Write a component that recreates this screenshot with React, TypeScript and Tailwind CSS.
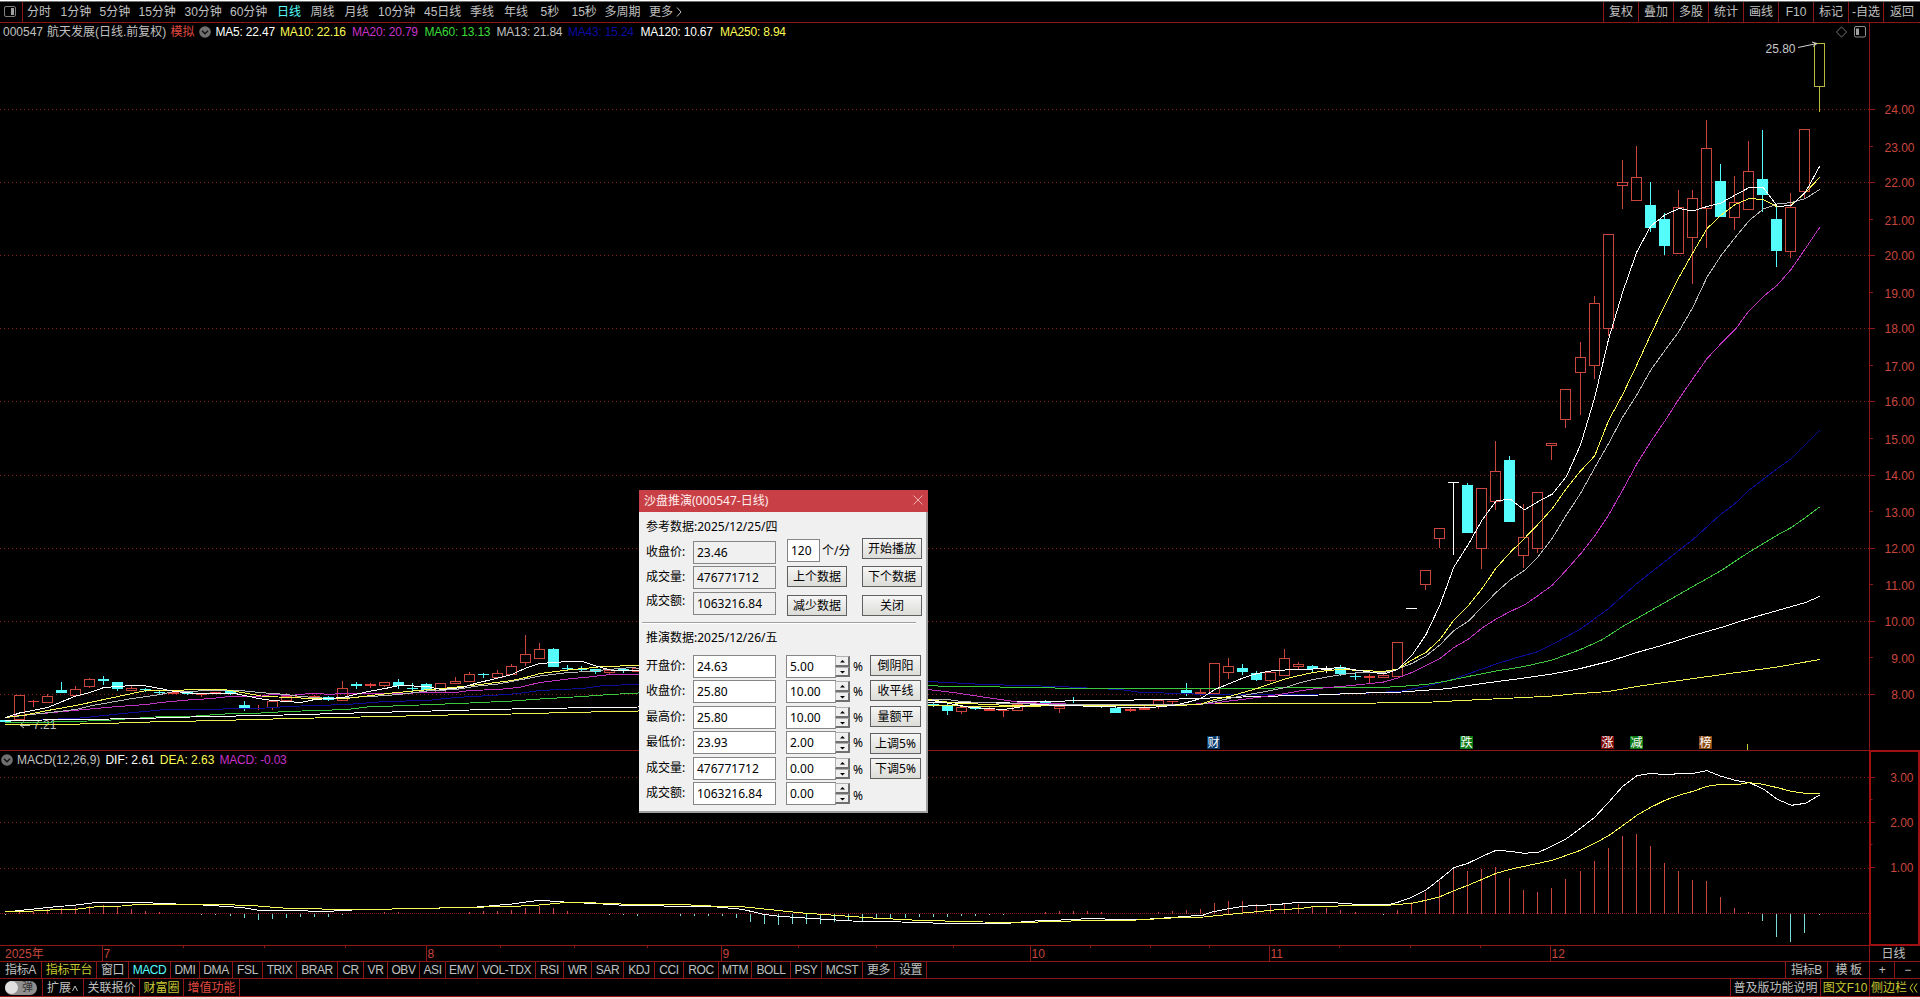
import clsx from "clsx";

const FONT = "font-['Liberation_Sans','Noto_Sans_CJK_SC',sans-serif]";
const DIALOG_FONT = "font-['Noto_Sans','Noto_Sans_CJK_SC',sans-serif]";

const RED = "#c8463e";
const LINE = "#8e1616";
const CYAN = "#54fcfc";

const periods = [
  { label: "分时", w: "w-[33.5px]" },
  { label: "1分钟", w: "w-[39px]" },
  { label: "5分钟", w: "w-[39px]" },
  { label: "15分钟", w: "w-[46px]" },
  { label: "30分钟", w: "w-[45.5px]" },
  { label: "60分钟", w: "w-[47px]" },
  { label: "日线", w: "w-[33.5px]", active: true },
  { label: "周线", w: "w-[34px]" },
  { label: "月线", w: "w-[33.5px]" },
  { label: "10分钟", w: "w-[46px]" },
  { label: "45日线", w: "w-[46px]" },
  { label: "季线", w: "w-[34px]" },
  { label: "年线", w: "w-[36.5px]" },
  { label: "5秒", w: "w-[31px]" },
  { label: "15秒", w: "w-[33px]" },
  { label: "多周期", w: "w-[44.5px]" },
  { label: "更多", w: "w-[26px]" },
];

const tools = ["复权", "叠加", "多股", "统计", "画线", "F10", "标记", "-自选", "返回"];

const averages = [
  { text: "MA5: 22.47", cls: "w-[64.5px] text-white" },
  { text: "MA10: 22.16", cls: "w-[72px] text-[#fcfc54]" },
  { text: "MA20: 20.79", cls: "w-[72.5px] text-[#c832c8]" },
  { text: "MA60: 13.13", cls: "w-[72px] text-[#3cdc3c]" },
  { text: "MA13: 21.84", cls: "w-[71.5px] text-[#c0c0c0]" },
  { text: "MA43: 15.24", cls: "w-[72.5px] text-[#0c0ca0]" },
  { text: "MA120: 10.67", cls: "w-[79.5px] text-white" },
  { text: "MA250: 8.94", cls: "w-[80px] text-[#fcfc54]" },
];

const indicators = [
  { label: "指标A", cls: "w-[42px]" },
  { label: "指标平台", cls: "w-[55px] text-[#c8c832]" },
  { label: "窗口", cls: "w-[32px]" },
  { label: "MACD", cls: "w-[42px] text-[#54fcfc]" },
  { label: "DMI", cls: "w-[29px]" },
  { label: "DMA", cls: "w-[33px]" },
  { label: "FSL", cls: "w-[30px]" },
  { label: "TRIX", cls: "w-[34px]" },
  { label: "BRAR", cls: "w-[41px]" },
  { label: "CR", cls: "w-[26px]" },
  { label: "VR", cls: "w-[24px]" },
  { label: "OBV", cls: "w-[32px]" },
  { label: "ASI", cls: "w-[26px]" },
  { label: "EMV", cls: "w-[32px]" },
  { label: "VOL-TDX", cls: "w-[58px]" },
  { label: "RSI", cls: "w-[28px]" },
  { label: "WR", cls: "w-[28px]" },
  { label: "SAR", cls: "w-[32px]" },
  { label: "KDJ", cls: "w-[31px]" },
  { label: "CCI", cls: "w-[29px]" },
  { label: "ROC", cls: "w-[35px]" },
  { label: "MTM", cls: "w-[33px]" },
  { label: "BOLL", cls: "w-[39px]" },
  { label: "PSY", cls: "w-[31px]" },
  { label: "MCST", cls: "w-[41px]" },
  { label: "更多", cls: "w-[32px]" },
  { label: "设置", cls: "w-[32px]" },
];

// r hollow up, f flat up, c down, w unchanged, y simulated
type Kind = "r" | "f" | "c" | "w" | "y";
// [index, high, body top, body bottom, low, kind]
type Candle = [number, number, number, number, number, Kind];

const candles: Candle[] = [
  [0, 720, 720, 722, 722, "c"],
  [1, 695, 695, 720, 720, "r"],
  [2, 700, 701, 702, 707, "f"],
  [3, 694, 696, 703, 703, "r"],
  [4, 682, 690, 693, 693, "c"],
  [5, 686, 689, 696, 696, "r"],
  [6, 678, 679, 687, 688, "r"],
  [7, 676, 679, 681, 685, "c"],
  [8, 682, 682, 689, 691, "c"],
  [9, 686, 688, 691, 691, "r"],
  [10, 688, 689, 690, 692, "c"],
  [11, 690, 692, 693, 695, "c"],
  [12, 692, 692, 694, 694, "f"],
  [13, 691, 691, 694, 695, "c"],
  [14, 693, 694, 695, 697, "f"],
  [15, 692, 692, 693, 693, "f"],
  [16, 691, 691, 694, 695, "c"],
  [17, 701, 705, 708, 711, "c"],
  [18, 705, 708, 709, 710, "f"],
  [19, 701, 701, 708, 710, "r"],
  [20, 693, 696, 701, 701, "r"],
  [21, 696, 696, 697, 697, "f"],
  [22, 695, 696, 698, 698, "f"],
  [23, 696, 697, 700, 701, "c"],
  [24, 681, 688, 701, 701, "r"],
  [25, 682, 684, 686, 689, "c"],
  [26, 683, 684, 686, 688, "f"],
  [27, 682, 682, 686, 687, "r"],
  [28, 679, 682, 686, 689, "c"],
  [29, 683, 688, 689, 691, "c"],
  [30, 683, 684, 690, 692, "c"],
  [31, 683, 683, 693, 693, "r"],
  [32, 677, 681, 684, 684, "r"],
  [33, 672, 674, 682, 682, "r"],
  [34, 673, 674, 675, 678, "c"],
  [35, 670, 673, 678, 678, "r"],
  [36, 664, 666, 675, 675, "r"],
  [37, 635, 654, 663, 666, "r"],
  [38, 643, 649, 659, 659, "r"],
  [39, 648, 649, 667, 667, "c"],
  [40, 665, 668, 669, 671, "c"],
  [41, 666, 669, 670, 672, "c"],
  [42, 669, 669, 672, 674, "c"],
  [43, 670, 670, 673, 675, "r"],
  [44, 668, 669, 670, 673, "c"],
  [45, 668, 668, 672, 672, "r"],
  [66, 702, 704, 705, 707, "c"],
  [67, 704, 705, 711, 715, "c"],
  [68, 707, 707, 712, 714, "r"],
  [69, 707, 707, 709, 710, "c"],
  [70, 706, 709, 711, 711, "f"],
  [71, 709, 710, 711, 717, "f"],
  [72, 704, 704, 711, 711, "r"],
  [73, 702, 702, 704, 704, "f"],
  [74, 700, 702, 703, 705, "c"],
  [75, 706, 706, 709, 713, "r"],
  [76, 697, 700, 701, 703, "c"],
  [78, 704, 705, 707, 708, "c"],
  [79, 706, 708, 713, 713, "c"],
  [80, 708, 709, 711, 712, "f"],
  [81, 706, 708, 710, 710, "f"],
  [82, 700, 700, 706, 709, "r"],
  [83, 701, 701, 702, 704, "f"],
  [84, 683, 690, 694, 696, "c"],
  [85, 689, 692, 694, 696, "r"],
  [86, 663, 663, 694, 694, "r"],
  [87, 658, 666, 673, 679, "r"],
  [88, 664, 668, 672, 675, "c"],
  [89, 671, 673, 680, 681, "c"],
  [90, 672, 672, 681, 682, "r"],
  [91, 649, 658, 676, 676, "r"],
  [92, 662, 664, 667, 669, "r"],
  [93, 665, 666, 669, 672, "c"],
  [94, 666, 669, 670, 673, "w"],
  [95, 665, 667, 674, 676, "c"],
  [96, 673, 676, 677, 680, "c"],
  [97, 674, 676, 678, 683, "f"],
  [98, 671, 675, 678, 678, "r"],
  [99, 642, 642, 677, 677, "r"],
  [100, 608, 608, 609, 609, "w"],
  [101, 570, 570, 585, 590, "r"],
  [102, 528, 528, 539, 548, "r"],
  [103, 482, 482, 483, 555, "w"],
  [104, 483, 485, 533, 533, "c"],
  [105, 488, 488, 549, 569, "r"],
  [106, 441, 471, 502, 510, "r"],
  [107, 456, 460, 522, 522, "c"],
  [108, 504, 537, 556, 568, "r"],
  [109, 492, 492, 549, 553, "r"],
  [110, 443, 443, 446, 460, "r"],
  [111, 389, 389, 420, 428, "r"],
  [112, 342, 357, 373, 415, "r"],
  [113, 296, 303, 366, 379, "r"],
  [114, 234, 234, 329, 336, "r"],
  [115, 160, 182, 186, 209, "r"],
  [116, 146, 177, 201, 201, "r"],
  [117, 182, 205, 228, 232, "c"],
  [118, 213, 219, 246, 255, "c"],
  [119, 190, 207, 254, 254, "r"],
  [120, 190, 198, 238, 284, "r"],
  [121, 120, 148, 209, 248, "r"],
  [122, 164, 181, 217, 217, "c"],
  [123, 176, 202, 218, 230, "r"],
  [124, 141, 171, 210, 210, "r"],
  [125, 130, 179, 195, 212, "c"],
  [126, 204, 219, 251, 267, "c"],
  [127, 193, 207, 252, 258, "r"],
  [128, 129, 129, 192, 199, "r"],
  [129, 43, 43, 87, 112, "y"],
];

// flat lists of index, y
const MA5 = [
  0, 717.5, 1, 713, 3, 707.5, 5, 696, 6, 692.5, 7, 687.5, 9, 685.5, 10, 686, 11, 688.5, 12, 691.5, 13.5, 693.5,
  16.5, 694, 18, 698.5, 19, 700.5, 21, 702.5, 22, 699.5, 24, 697.5, 25, 694, 26, 691, 27, 688.5, 28, 685.5,
  30, 686.5, 31, 689.5, 32.5, 687.5, 33.5, 683, 34, 681.5, 36, 674.5, 37, 668, 38, 663.5, 39, 662.5, 40, 661.5,
  41, 661.5, 42, 666, 43, 670, 45, 670.5, 65.6, 700, 66.6, 702, 68.6, 707.5, 71, 709.5, 72, 707.5, 73, 704.5,
  79, 707, 81, 708, 83, 705.5, 84, 702.5, 85, 698.5, 86, 689.5, 88, 678, 89, 673.5, 90, 671, 91, 670, 94, 668.5,
  95, 667.5, 96, 670, 97, 672, 98, 674, 99, 669.5, 100, 655.5, 101, 635, 102, 605, 103, 567, 104, 545, 105, 520,
  106, 501, 107, 499, 108, 510, 109, 501.5, 110, 494, 111, 476.5, 112, 445, 113, 398, 114, 339, 115, 292,
  116, 252, 117, 226, 118, 215, 119, 208.5, 120, 211, 121, 206.5, 122, 203, 123, 195, 124, 187.5, 125, 187.5,
  126, 206.5, 127, 205.5, 128, 192, 129, 166.5,
];
const MA10 = [
  0, 717.5, 1.4, 715, 3.2, 710, 5, 705.5, 6, 702.5, 8, 696.5, 10, 690.5, 15.5, 689.5, 17, 693, 18.2, 696,
  20, 697.5, 22, 698.5, 24.6, 698, 26, 695.5, 27.5, 693, 29, 691, 31, 688.5, 32.5, 686.5, 34, 684, 36, 680.5,
  37, 677.5, 38, 673.5, 40, 670, 41.5, 668, 42.5, 666.5, 45, 665.5, 65.6, 699.5, 67.5, 703, 70, 704.5, 72, 706,
  75.5, 705.5, 80, 705.5, 83, 706, 85, 704, 86, 699.5, 87, 696.5, 88, 692.5, 89, 688.5, 90, 683.5, 91, 679,
  92, 675.5, 93, 672.5, 94, 670.5, 95, 669.5, 96.5, 670.5, 98, 671.5, 99, 669, 100, 660, 101, 652.5, 102, 639.5,
  103, 620, 104, 606, 105, 588.5, 106, 568, 107, 552.5, 108, 538.5, 109, 524, 110, 508.5, 111, 488.5, 112, 471,
  113, 456, 114, 420.5, 115, 394.5, 116, 365, 117, 334.5, 118, 305, 119, 277.5, 120, 252.5, 121, 228.5,
  122, 215, 123, 204.5, 124, 198.5, 125, 199.5, 126, 207, 127, 205, 128, 192.5, 129, 177.5,
];
const MA13 = [
  0, 717.5, 2.2, 714, 5, 709.5, 6, 706, 7, 703.5, 9, 698.5, 11, 694.5, 12, 691.5, 15.5, 690.5, 17, 691,
  18.5, 693, 20, 694.5, 21, 696.5, 23, 698.5, 26.5, 696, 28, 694.5, 30, 691, 32, 689.5, 33.3, 686.5, 35, 684,
  36, 681.5, 38, 676, 40, 672.5, 41.5, 671.5, 42.5, 670, 44.5, 667.5, 65.6, 699, 67, 699.5, 68, 701.5,
  69.3, 702.5, 71.5, 703.5, 75, 704.5, 85, 704.5, 88, 695.5, 90, 690.5, 91, 687.5, 92, 683, 93, 679.5, 94, 677,
  95, 674.5, 96, 673, 98, 672.5, 99, 669, 100, 663.5, 101, 656, 102, 645, 103, 630.5, 104, 621.5, 105, 607,
  106, 592.5, 107, 580, 108, 570.5, 109, 556.5, 110, 538, 111, 515, 112, 493.5, 113, 468, 114, 443.5, 115, 417,
  116, 395, 117, 370, 118, 350.5, 119, 331.5, 120, 307, 121, 277, 122, 255.5, 123, 237.5, 124, 220.5, 125, 209,
  126, 204, 127, 202.5, 128, 198.5, 129, 189.5,
];
const MA20 = [
  0.2, 716.5, 3.4, 712.5, 6, 709, 8, 706.5, 10, 704.5, 11, 702.5, 13, 700, 14.7, 698.5, 15.9, 696.5, 18, 696.5,
  19, 694.5, 20.2, 695.5, 22, 693, 23, 694.5, 24.3, 693, 27, 694, 30, 692.5, 32, 692.5, 33, 690.5, 35, 689.5,
  36.5, 687.5, 38, 682.5, 40, 679, 41.5, 677, 43, 674.5, 45, 674.5, 65.6, 689.5, 67.4, 692.5, 69.3, 696.5,
  71, 700, 72.2, 702.5, 76.5, 704.5, 79, 704.5, 84, 704.5, 86, 703, 87, 701, 88, 699.5, 89.5, 696.5, 91, 693.5,
  92, 691, 93, 689, 94, 687.5, 95, 686.5, 96.4, 684.5, 98, 682, 99, 678, 100, 672.5, 101, 665.5, 102, 658.5,
  103, 647.5, 104, 639.5, 105, 628, 106, 619, 107, 611.5, 108, 605, 109, 595.5, 110, 585, 111, 570, 112, 554,
  113, 536, 114, 515, 115, 490, 116, 464, 117, 441.5, 118, 421, 119, 399, 120, 378.5, 121, 358.5, 122, 343.5,
  123, 329.5, 124, 310.5, 125, 296.5, 126, 285, 127, 269, 128, 248.5, 129, 227.5,
];
const MA43 = [
  2.5, 719.5, 5, 718.5, 6, 717, 8, 714, 11, 710, 13, 709.5, 18, 708.5, 20, 706.5, 22, 705.5, 24.3, 704.5,
  27, 701.5, 30, 700.5, 32, 697.5, 34.5, 695.5, 36.5, 693.5, 38, 690.5, 41, 688.5, 42.5, 685.5, 45, 684.5,
  65.6, 681.5, 67, 682.5, 69.6, 684.5, 75, 686.5, 77.5, 688.5, 79.3, 689.5, 80.8, 692.5, 84, 693.5, 85, 694.5,
  90.5, 695, 93.6, 694.5, 97, 693, 99.3, 691, 101, 686.5, 103, 679, 104, 674, 106, 664, 107, 659.5, 109, 651.5,
  110, 644.5, 112, 629, 114, 608.5, 116, 583.5, 118, 561.5, 120, 539.5, 122, 514, 123, 503.5, 124, 490,
  126, 468.5, 127, 458.5, 129, 430.5,
];
const MA60 = [
  0, 723, 5, 721.5, 7.5, 720, 10.6, 717, 13, 716.5, 15.6, 714, 17.6, 713.5, 20, 711.5, 24.3, 709.5, 25.7, 707,
  30.4, 704.5, 33, 703, 36, 701, 38, 699, 41, 696.5, 43, 694.5, 45, 693, 65.6, 685.5, 67, 686.5, 74.3, 687.5,
  75, 688.5, 89, 688.5, 93, 687, 98, 687.3, 99, 686.7, 101, 684.5, 102.5, 681, 104, 676.5, 106, 671, 108, 666.5,
  110, 660, 112, 649.5, 113.5, 640, 115, 626.5, 116, 618.5, 118, 602.5, 120, 586.5, 122, 570.5, 124, 552,
  126, 535, 127, 527.5, 128, 517.5, 129, 507,
];
const MA120 = [
  0, 720.5, 5.4, 719.5, 9.5, 718.5, 14.4, 716.5, 18.5, 715.5, 22.4, 714, 26, 712.5, 29, 711.5, 33, 710, 36, 709,
  40, 708, 45, 707, 65.6, 703, 71.5, 702, 76.5, 700.7, 82, 699.7, 85, 698.3, 88, 697, 90.5, 696, 93.4, 695,
  96, 693.3, 99.3, 692, 102.5, 688.7, 105, 683.5, 108, 678, 110, 674, 112, 668.5, 114, 661.5, 116, 652.5,
  118, 644.5, 120, 635.5, 122, 627.5, 124, 618.5, 126, 610.5, 128, 602.5, 129, 596.5,
];
const MA250 = [
  0, 724.5, 4.3, 724.3, 7, 723.5, 11, 721.7, 14.7, 720.7, 17.6, 719.5, 20.5, 718.5, 23.5, 717.5, 27, 716.5,
  33, 714.5, 36, 714, 40, 712.5, 45, 711, 65.6, 705.7, 70, 706.3, 80, 705.5, 86, 703.7, 96, 703.5, 99, 702.5,
  101.5, 702, 105, 699.5, 108, 697.5, 110, 696, 111.5, 694, 114, 691.5, 116, 686.5, 118, 682.5, 122, 674.7,
  126, 667, 129, 659.5,
];
const DIF = [
  0, 912, 1, 910.5, 3, 907.5, 5, 905, 6.6, 902.3, 9.5, 902.3, 11.5, 903.7, 14, 905, 16, 906.7, 17, 908,
  18, 910.3, 23, 911.3, 25, 909.7, 28.6, 908.7, 33.3, 907.3, 36, 904, 37, 902, 38, 900.3, 39.7, 902, 42.5, 904,
  44, 905.3, 48, 906.3, 50.6, 907, 52.4, 909.3, 53.8, 914, 55, 916.3, 57.9, 919, 60.2, 921, 63.7, 922,
  66.6, 923.3, 71.3, 923.3, 72.7, 921.3, 75.6, 919.7, 77.4, 918.3, 78.5, 919.3, 81.4, 919, 83.7, 916.7,
  85.2, 915, 85.8, 912, 87, 908.7, 88, 906.3, 90.6, 904.3, 92, 902.3, 94.4, 902.7, 96.5, 904.7, 98.3, 905,
  99, 902.3, 100, 897.3, 101, 890, 102, 879.3, 103, 867.7, 104, 863.3, 105, 856.3, 106, 850.3, 107, 851.3,
  108, 853.3, 109, 852.3, 110, 846, 111, 838.7, 112, 828.3, 113, 817.3, 114, 802.3, 115, 786.3, 116, 775.7,
  117, 773.3, 118, 774.7, 119, 773.7, 120, 773.3, 121, 770.7, 122, 776.3, 123, 780.3, 124, 782.7, 125, 789,
  126, 799.3, 127, 805.3, 128, 803.3, 129, 795,
];
const DEA = [
  0, 911.5, 2, 911, 3.5, 909.7, 5, 909.3, 6.6, 906.5, 8.3, 906, 9.5, 904.3, 14.7, 904.5, 17.3, 905.3, 20, 908.3,
  25, 909.7, 28.6, 908.7, 35, 906.7, 37.4, 905.7, 39.7, 902.7, 41.4, 902.7, 45, 904.7, 48.3, 904.7, 50.6, 906.3,
  52.4, 906.7, 54.4, 909.7, 56.7, 913, 59, 915.3, 61.7, 918, 64.9, 920.3, 69.5, 922, 72.7, 922.3, 76.5, 920.7,
  80.5, 920, 82.9, 918, 85.2, 917, 87.5, 913.7, 89, 911.7, 90.6, 909.5, 92, 908.7, 93, 906.7, 96.5, 905.3,
  98.3, 905.3, 100, 903.3, 101, 900.3, 102, 896.7, 103, 890.7, 104, 885.3, 105, 879.3, 106, 873.3, 107, 869.3,
  108, 866.3, 109, 863.3, 110, 860.3, 111, 855.3, 112, 850.3, 113, 843.3, 114, 835.7, 115, 825.7, 116, 815.3,
  117, 807.3, 118, 800.3, 119, 795.3, 120, 791.3, 121, 786.3, 122, 784.3, 123.3, 784.3, 124, 782.7, 125, 784.3,
  126, 787.7, 127, 791.3, 128, 793.3, 129, 793.3,
];
// index, bar end
const HIST = [
  0, 915, 1, 912, 2, 911, 3, 909, 4, 908, 5, 907, 6, 906, 7, 905, 8, 907, 9, 909, 10, 911, 11, 912, 14, 915,
  15, 915, 16, 916, 17, 918, 18, 920, 19, 919, 20, 918, 21, 917, 22, 917, 23, 917, 24, 915, 27, 912, 28, 912,
  33, 912, 34, 911, 35, 911, 36, 910, 37, 908, 38, 906, 39, 908, 40, 911, 43, 914, 44, 915, 45, 916, 48, 916,
  49, 916, 50, 916, 51, 916, 52, 918, 53, 922, 54, 924, 55, 925, 56, 924, 57, 924, 58, 924, 59, 922, 60, 921,
  61, 921, 62, 919, 63, 918, 64, 918, 65, 917, 66, 917, 67, 917, 68, 916, 69, 916, 70, 915, 71, 915, 74, 912,
  75, 911, 76, 911, 77, 911, 78, 912, 82, 912, 83, 911, 84, 910, 85, 909, 86, 903, 87, 901, 88, 901, 89, 904,
  90, 904, 91, 903, 92, 904, 93, 906, 94, 908, 95, 910, 96, 912, 98, 914, 99, 910, 100, 902, 101, 892, 102, 881,
  103, 868, 104, 871, 105, 869, 106, 867, 107, 878, 108, 890, 109, 892, 110, 888, 111, 879, 112, 871, 113, 861,
  114, 848, 115, 836, 116, 834, 117, 846, 118, 863, 119, 871, 120, 880, 121, 881, 122, 897, 123, 908, 124, 912,
  125, 921, 126, 937, 127, 942, 128, 933, 129, 915,
];

const barX = (i: number) => Math.floor(14.062 * i + 5.062);

function pairs(flat: number[]) {
  const out: [number, number][] = [];
  for (let k = 0; k < flat.length; k += 2) out.push([flat[k], flat[k + 1]]);
  return out;
}

function Curve({ data, color }: { data: number[]; color: string }) {
  const points = pairs(data)
    .map(([i, y]) => `${(14.0625 * i + 5.5).toFixed(1)},${y}`)
    .join(" ");
  return <polyline points={points} fill="none" stroke={color} strokeWidth={1} />;
}

function CandleBar({ c }: { c: Candle }) {
  const [i, high, top, bottom, low, kind] = c;
  const x = barX(i);
  const color = { r: RED, f: "#e0403a", c: CYAN, w: "#ffffff", y: "#b8b83c" }[kind];
  const hollow = (kind === "r" || kind === "y") && bottom - top > 2;
  return (
    <g fill={color}>
      {high < top && <rect x={x} y={high} width={1} height={top - high} />}
      {low > bottom && <rect x={x} y={bottom} width={1} height={low - bottom} />}
      {hollow ? (
        <rect x={x - 4.5} y={top + 0.5} width={10} height={bottom - top - 1} fill="none" stroke={color} />
      ) : (
        <rect x={x - 5} y={top} width={11} height={bottom - top} />
      )}
    </g>
  );
}

const badges = [
  { x: 1207, text: "财", fill: "#083a6c" },
  { x: 1460, text: "跌", fill: "#0c7a14" },
  { x: 1601, text: "涨", fill: "#7c0808" },
  { x: 1630, text: "减", fill: "#0c7a14" },
  { x: 1699, text: "榜", fill: "#8a4a14" },
];

function PriceChart() {
  return (
    <svg width={1869} height={709} viewBox="0 41 1869 709" className={FONT}>
      <g stroke="#8a1c1c" strokeDasharray="1 3" shapeRendering="crispEdges">
        {[24, 22, 20, 18, 16, 14, 12, 10, 8].map((p) => {
          const y = Math.floor(986.9 - 36.56 * p) + 0.5;
          return <line key={p} x1={0} x2={1869} y1={y} y2={y} />;
        })}
      </g>
      <text x={33} y={729} fontSize={12} fill="#c0c0c0">7.21</text>
      <path d="M30 725.5H20M24 721.5l-4 3.5 4 3" stroke="#c0c0c0" fill="none" />
      <g shapeRendering="crispEdges">
        {candles.map((c) => (
          <CandleBar key={c[0]} c={c} />
        ))}
        <Curve data={MA250} color="#f0f050" />
        <Curve data={MA43} color="#0c0c96" />
        <Curve data={MA60} color="#3cc83c" />
        <Curve data={MA120} color="#ffffff" />
        <Curve data={MA20} color="#c032c0" />
        <Curve data={MA13} color="#b8b8b8" />
        <Curve data={MA10} color="#fcfc54" />
        <Curve data={MA5} color="#ffffff" />
      </g>
      <text x={1765.5} y={53} fontSize={12} fill="#c8c8c8">25.80</text>
      <path d="M1798 47.5L1817 43.5M1812 42l5 1.5-4 3" stroke="#d0d0d0" fill="none" />
      {badges.map((b) => (
        <g key={b.x}>
          <rect x={b.x} y={736} width={13} height={13} fill={b.fill} />
          <text x={b.x + 0.5} y={747} fontSize={12} fill="#fff">{b.text}</text>
        </g>
      ))}
      <rect x={1747} y={744} width={1} height={6} fill="#c8c832" />
    </svg>
  );
}

function PriceAxis() {
  const prices = Array.from({ length: 17 }, (_, k) => 24 - k);
  return (
    <svg width={50} height={727} viewBox="0 23 50 727" className={FONT}>
      {prices.map((p) => {
        const even = p % 2 === 0;
        const y = Math.floor(986.9 - 36.56 * p);
        return (
          <g key={p}>
            <rect x={0} y={y} width={even ? 5 : 3} height={1} fill={LINE} />
            <text x={44.5} y={y + (even ? 5 : 6)} fontSize={12} textAnchor="end" fill={RED}>{p.toFixed(2)}</text>
          </g>
        );
      })}
    </svg>
  );
}

function MacdChart() {
  return (
    <svg width={1869} height={177} viewBox="0 768 1869 177">
      <g stroke="#8a1c1c" strokeDasharray="1 3" shapeRendering="crispEdges">
        <path d="M0 777.5H1869M0 822.5H1869M0 868.5H1869" />
        <path d="M0 913.5H1869" strokeDasharray="1 1" />
      </g>
      <g shapeRendering="crispEdges">
        {pairs(HIST).map(([i, end]) =>
          end > 913 ? (
            <rect key={i} x={barX(i)} y={914} width={1} height={Math.max(1, end - 914)} fill="#7cdcdc" />
          ) : (
            <rect key={i} x={barX(i)} y={end} width={1} height={914 - end} fill={RED} />
          ),
        )}
        <Curve data={DIF} color="#ffffff" />
        <Curve data={DEA} color="#fcfc54" />
      </g>
    </svg>
  );
}

function MacdAxis() {
  return (
    <svg width={46} height={190} viewBox="0 753 46 190" className={FONT}>
      {[3, 2, 1].map((v) => {
        const y = Math.round(913.5 - 45.3 * v);
        return (
          <g key={v}>
            <rect x={0} y={y} width={4} height={1} fill={LINE} />
            <text x={42.5} y={y + 5} fontSize={12} textAnchor="end" fill={RED}>{v.toFixed(2)}</text>
          </g>
        );
      })}
      <path d="M0 800.5h1.5M0 845.5h1.5" stroke={LINE} />
    </svg>
  );
}

const months = [
  { x: 102, text: "7" },
  { x: 426, text: "8" },
  { x: 721, text: "9" },
  { x: 1030, text: "10" },
  { x: 1269, text: "11" },
  { x: 1550, text: "12" },
];
const weekTicks = [183, 264, 345, 500, 574, 647, 798, 876, 953, 1090, 1150, 1209, 1339, 1410, 1480];

function TimeAxis() {
  return (
    <svg width={1869} height={15} viewBox="0 946 1869 15" className={FONT}>
      <text x={5} y={958} fontSize={12} fill={RED}>2025年</text>
      {months.map((m) => (
        <g key={m.x}>
          <rect x={m.x} y={946} width={1} height={15} fill={LINE} />
          <text x={m.x + 1.5} y={958} fontSize={12} fill={RED}>{m.text}</text>
        </g>
      ))}
      {weekTicks.map((x) => (
        <rect key={x} x={x} y={946} width={1} height={2} fill={LINE} />
      ))}
    </svg>
  );
}

function Chevron() {
  return (
    <svg width={12} height={12} viewBox="0 0 12 12" className="shrink-0">
      <circle cx={6} cy={6} r={5.8} fill="#707070" />
      <path d="M3 4.8l3 3 3-3" fill="none" stroke="#111" strokeWidth={1.4} />
    </svg>
  );
}

function Btn({ children, className }: { children: string; className?: string }) {
  return (
    <button
      className={clsx(
        "flex h-[21px] shrink-0 items-center justify-center whitespace-nowrap border border-[#606060] bg-linear-to-b from-[#f6f6f6] to-[#dcdcd8]",
        className,
      )}
    >
      {children}
    </button>
  );
}

function Field({ value, className }: { value: string; className?: string }) {
  return (
    <div className={clsx("flex h-[23px] shrink-0 items-center border border-[#868686] pl-[3px]", className)}>{value}</div>
  );
}

function Label({ children, className }: { children: string; className?: string }) {
  return <span className={clsx("w-[47px] shrink-0 whitespace-nowrap leading-[22px]", className)}>{children}</span>;
}

function Spinner() {
  return (
    <div className="-ml-px flex h-[21px] w-[15px] shrink-0 flex-col">
      {["M4 6.5h5L6.5 4z", "M4 4h5L6.5 6.5z"].map((d) => (
        <div
          key={d}
          className="h-[10.5px] border-r-2 border-b-2 border-l border-t border-r-[#707070] border-b-[#707070] border-l-[#b0b0b0] border-t-[#b0b0b0] bg-[#f0f0f0]"
        >
          <svg width={12} height={8} viewBox="0 1 12 8">
            <path d={d} fill="#000" />
          </svg>
        </div>
      ))}
    </div>
  );
}

const simRows = [
  { label: "开盘价:", value: "24.63", pct: "5.00", btn: "倒阴阳", row: "h-[25px]" },
  { label: "收盘价:", value: "25.80", pct: "10.00", btn: "收平线", row: "h-[26px]" },
  { label: "最高价:", value: "25.80", pct: "10.00", btn: "量额平", row: "h-[25px]" },
  { label: "最低价:", value: "23.93", pct: "2.00", btn: "上调5%", row: "h-[26px]", btnCls: "mt-[2px]" },
  { label: "成交量:", value: "476771712", pct: "0.00", btn: "下调5%", row: "h-[25px]", btnCls: "mt-px", pctCls: "mt-px" },
  { label: "成交额:", value: "1063216.84", pct: "0.00", row: "h-[23px]", pctCls: "mt-[2px]" },
];

function SandboxDialog() {
  return (
    <div
      className={clsx(
        DIALOG_FONT,
        "absolute left-[639px] top-[490px] h-[323px] w-[289px] border-r-2 border-b-2 border-[#a0a0a0] bg-[#f0f0f0] text-[12px] leading-none text-black",
      )}
    >
      <div className="-mr-[2px] flex h-[22px] items-center justify-between bg-[#c84046] pl-[5px] pr-[5px] text-[#ffecec]">
        <span className="whitespace-nowrap">沙盘推演(000547-日线)</span>
        <svg width={10} height={10} viewBox="0 0 10 10" className="mb-[2px]">
          <path d="M.5.5l9 9M9.5.5l-9 9" stroke="#f0b0b0" strokeWidth={1} />
        </svg>
      </div>
      <div className="flex h-[26px] items-center pl-[7px] pt-[4px]">参考数据:2025/12/25/四</div>
      <div className="flex h-[28px] items-start pl-[7px]">
        <Label className="mt-[3px]">收盘价:</Label>
        <Field value="23.46" className="mt-[3px] w-[83px]" />
        <Field value="120" className="ml-[11px] mt-px w-[33px] bg-white" />
        <span className="ml-[2px] mt-[2px] w-[40px] leading-[22px]">个/分</span>
        <Btn className="w-[60px]">开始播放</Btn>
      </div>
      <div className="flex h-[26px] items-start pl-[7px]">
        <Label>成交量:</Label>
        <Field value="476771712" className="w-[83px]" />
        <Btn className="ml-[11px] w-[60px]">上个数据</Btn>
        <Btn className="ml-[15px] w-[60px]">下个数据</Btn>
      </div>
      <div className="flex h-[30px] items-start pl-[7px]">
        <Label className="-mt-[2px]">成交额:</Label>
        <Field value="1063216.84" className="w-[83px]" />
        <Btn className="ml-[11px] mt-[3px] w-[60px]">减少数据</Btn>
        <Btn className="ml-[15px] mt-[3px] w-[60px]">关闭</Btn>
      </div>
      <div className="ml-[3px] h-[2px] w-[274px] border-b border-t border-b-white border-t-[#a0a0a0]" />
      <div className="flex h-[31px] items-center pb-[3px] pl-[7px]">推演数据:2025/12/26/五</div>
      {simRows.map((r) => (
        <div key={r.label} className={clsx("flex items-start pl-[7px]", r.row)}>
          <Label>{r.label}</Label>
          <Field value={r.value} className="w-[83px] bg-white" />
          <div className="ml-[10px] flex h-[23px] w-[65px] items-center">
            <Field value={r.pct} className="w-[50px] border-r-0 bg-white" />
            <Spinner />
          </div>
          <span className={clsx("ml-[2px] w-[17px] leading-[24px]", r.pctCls)}>%</span>
          {r.btn && <Btn className={clsx("w-[51px]", r.btnCls)}>{r.btn}</Btn>}
        </div>
      ))}
    </div>
  );
}

function Cell({ children, className }: { children: React.ReactNode; className?: string }) {
  return (
    <div
      className={clsx("flex h-full shrink-0 items-center justify-center whitespace-nowrap border-r border-[#8e1616]", className)}
    >
      {children}
    </div>
  );
}

export default function App() {
  return (
    <div
      className={clsx(
        FONT,
        "relative flex h-[999px] w-[1920px] flex-col overflow-hidden bg-black text-[12px] leading-none text-[#c0c0c0]",
      )}
    >
      <div className="h-[2px] shrink-0 border-b border-[#707070] bg-white" />

      <div className="flex h-[21px] shrink-0 items-center border-b border-[#8e1616]">
        <div className="flex h-full w-[23px] items-center border-r border-[#8e1616] pl-[4px]">
          <svg width={12} height={12} viewBox="0 0 12 12">
            <rect x={0.5} y={0.5} width={11} height={10} rx={1.5} fill="none" stroke="#808080" />
            <rect x={7} y={2} width={3} height={7} fill="#a0a0a0" />
          </svg>
        </div>
        <div className="flex flex-1 items-center pl-[4px]">
          {periods.map((p) => (
            <span key={p.label} className={clsx("shrink-0 whitespace-nowrap", p.w, p.active && "text-[#54fcfc]")}>
              {p.label}
            </span>
          ))}
          <svg width={8} height={12} viewBox="0 0 8 12">
            <path d="M2 1.5l4 4.5-4 4.5" fill="none" stroke="#c0c0c0" />
          </svg>
        </div>
        {tools.map((t) => (
          <div
            key={t}
            className="flex h-full w-[35px] items-center justify-center whitespace-nowrap border-l border-[#8e1616] last:w-[37px]"
          >
            {t}
          </div>
        ))}
      </div>

      <div className="flex h-[727px] shrink-0">
        <div className="w-[1869px]">
          <div className="flex h-[18px] items-center pl-[3px]">
            <span className="w-[44px]">000547</span>
            <span className="w-[123.5px] whitespace-nowrap">航天发展(日线.前复权)</span>
            <span className="w-[28px] text-[#e04a40]">模拟</span>
            <Chevron />
            <div className="flex flex-1 pl-[5px] tracking-[-0.2px]">
              {averages.map((a) => (
                <span key={a.text} className={clsx("shrink-0 whitespace-nowrap", a.cls)}>
                  {a.text}
                </span>
              ))}
            </div>
            <svg width={30} height={12} viewBox="0 0 30 12" className="mr-[3px]">
              <path d="M5.5.8l5 5.2-5 5.2-5-5.2z" fill="none" stroke="#707070" />
              <rect x={18.5} y={0.5} width={11} height={10.5} rx={1.5} fill="none" stroke="#909090" />
              <rect x={20} y={2.5} width={3} height={6.5} fill="#a0a0a0" />
            </svg>
          </div>
          <PriceChart />
        </div>
        <div className="w-[51px] border-l border-[#8e1616]">
          <PriceAxis />
        </div>
      </div>

      <div className="flex h-[196px] shrink-0">
        <div className="w-[1869px] border-b border-t border-[#8e1616]">
          <div className="flex h-[17px] items-center gap-[5px] pl-px pt-px">
            <Chevron />
            <span className="-ml-px">MACD(12,26,9)</span>
            <span className="text-white">DIF: 2.61</span>
            <span className="text-[#fcfc54]">DEA: 2.63</span>
            <span className="text-[#c832c8] tracking-[-0.2px]">MACD: -0.03</span>
          </div>
          <MacdChart />
        </div>
        <div className="w-[51px] border-2 border-[#a01010]">
          <MacdAxis />
        </div>
      </div>

      <div className="flex h-[16px] shrink-0 border-b border-[#8e1616]">
        <TimeAxis />
        <div className="flex flex-1 items-center justify-center border-l border-[#8e1616] pr-[3px]">日线</div>
      </div>

      <div className="flex h-[17px] shrink-0 items-center border-b border-[#8e1616] tracking-[-0.4px]">
        {indicators.map((it) => (
          <Cell key={it.label} className={it.cls}>
            {it.label}
          </Cell>
        ))}
        <div className="h-full flex-1 border-r border-[#8e1616]" />
        <Cell className="w-[42px]">指标B</Cell>
        <Cell className="w-[42px]">模&nbsp;板</Cell>
        <Cell className="w-[25px]">+</Cell>
        <div className="w-[25px] text-center">−</div>
      </div>

      <div className="flex h-[18px] shrink-0 items-center border-b border-[#a01818]">
        <Cell className="w-[43px]">
          <div className="flex h-[14px] w-[32px] items-center justify-between rounded-full bg-[#909090] pr-[4px] text-[11px] text-[#333]">
            <span className="h-[13px] w-[13px] rounded-full bg-[#e0e0e0]" />弹
          </div>
        </Cell>
        <Cell className="w-[41px]">
          扩展
          <svg width={8} height={10} viewBox="0 0 8 10">
            <path d="M1.5 8L4 3l2.5 5" fill="none" stroke="#c0c0c0" />
          </svg>
        </Cell>
        <Cell className="w-[56px]">关联报价</Cell>
        <Cell className="w-[44px] text-[#c8c832]">财富圈</Cell>
        <Cell className="w-[56px] text-[#e04a40]">增值功能</Cell>
        <div className="h-full flex-1 border-r border-[#8e1616]" />
        <Cell className="w-[90px]">普及版功能说明</Cell>
        <Cell className="w-[49px] text-[#c8c832]">图文F10</Cell>
        <div className="flex w-[50px] items-center whitespace-nowrap pl-px text-[#c8c832]">
          侧边栏
          <svg width={12} height={12} viewBox="0 0 12 12">
            <path d="M6 1.5L3 6l3 4.5M10 1.5L7 6l3 4.5" fill="none" stroke="#c8c832" />
          </svg>
        </div>
      </div>
      <div className="flex-1 bg-[#f4dcdc]" />

      <SandboxDialog />
    </div>
  );
}
